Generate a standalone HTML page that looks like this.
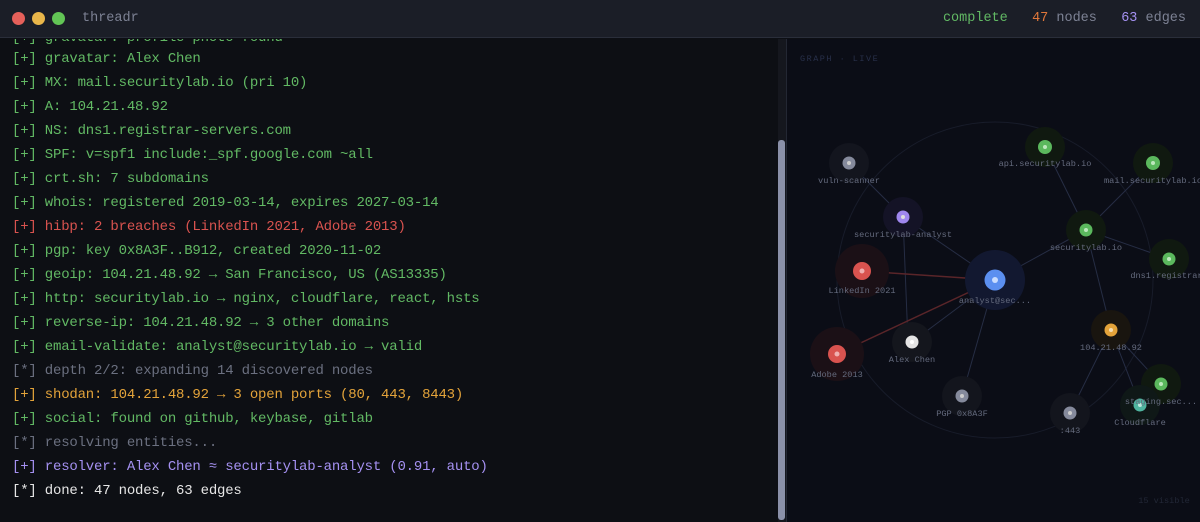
<!DOCTYPE html>
<html><head><meta charset="utf-8"><style>
*{margin:0;padding:0;box-sizing:border-box}
body{width:1200px;height:522px;overflow:hidden;background:#0d0f14;font-family:"Liberation Mono",monospace;position:relative}
.hdr{position:absolute;left:0;top:0;width:1200px;height:38px;background:#1b1e27;border-bottom:1px solid #2a2e3a}
.dot{position:absolute;top:12px;width:13px;height:13px;border-radius:50%}
.title{position:absolute;left:82px;top:11px;font-size:13.5px;color:#7d8294}
.stat{position:absolute;right:14px;top:11px;font-size:13.5px;color:#7d8294;white-space:pre}
.term{position:absolute;left:0;top:39px;width:778px;height:483px;background:#0d0f14;overflow:hidden}
.ln{position:absolute;left:12px;font-size:14px;letter-spacing:-0.2px;white-space:pre;line-height:20px}
.g{color:#62b964}.r{color:#d9534f}.o{color:#e3a33a}.d{color:#6b7080}.p{color:#a591f2}.w{color:#e6e6e6}
.track{position:absolute;left:778px;top:39px;width:8px;height:483px;background:#15171e}
.thumb{position:absolute;left:778px;top:140px;width:7px;height:380px;background:#8a90a8;border-radius:3px}
.graph{position:absolute;left:786px;top:39px;width:414px;height:483px;background:#0b0d16;border-left:1px solid #232733}
</style></head><body>
<div class="hdr">
<div class="dot" style="left:12px;background:#e5605a"></div>
<div class="dot" style="left:32px;background:#e9b64a"></div>
<div class="dot" style="left:52px;background:#62c555"></div>
<div class="title">threadr</div>
<div class="stat"><span style="color:#62b964">complete</span>   <span style="color:#e0773a">47</span> nodes   <span style="color:#a591f2">63</span> edges</div>
</div>
<div class="term">
<div class="ln g" style="top:-11px">[+] gravatar: profile photo found</div>
<div class="ln g" style="top:10px">[+] gravatar: Alex Chen</div>
<div class="ln g" style="top:34px">[+] MX: mail.securitylab.io (pri 10)</div>
<div class="ln g" style="top:58px">[+] A: 104.21.48.92</div>
<div class="ln g" style="top:82px">[+] NS: dns1.registrar-servers.com</div>
<div class="ln g" style="top:106px">[+] SPF: v=spf1 include:_spf.google.com ~all</div>
<div class="ln g" style="top:130px">[+] crt.sh: 7 subdomains</div>
<div class="ln g" style="top:154px">[+] whois: registered 2019-03-14, expires 2027-03-14</div>
<div class="ln r" style="top:178px">[+] hibp: 2 breaches (LinkedIn 2021, Adobe 2013)</div>
<div class="ln g" style="top:202px">[+] pgp: key 0x8A3F..B912, created 2020-11-02</div>
<div class="ln g" style="top:226px">[+] geoip: 104.21.48.92 → San Francisco, US (AS13335)</div>
<div class="ln g" style="top:250px">[+] http: securitylab.io → nginx, cloudflare, react, hsts</div>
<div class="ln g" style="top:274px">[+] reverse-ip: 104.21.48.92 → 3 other domains</div>
<div class="ln g" style="top:298px">[+] email-validate: analyst@securitylab.io → valid</div>
<div class="ln d" style="top:322px">[*] depth 2/2: expanding 14 discovered nodes</div>
<div class="ln o" style="top:346px">[+] shodan: 104.21.48.92 → 3 open ports (80, 443, 8443)</div>
<div class="ln g" style="top:370px">[+] social: found on github, keybase, gitlab</div>
<div class="ln d" style="top:394px">[*] resolving entities...</div>
<div class="ln p" style="top:418px">[+] resolver: Alex Chen ≈ securitylab-analyst (0.91, auto)</div>
<div class="ln w" style="top:442px">[*] done: 47 nodes, 63 edges</div>
</div>
<div class="track"></div><div class="thumb"></div>
<div class="graph">
<svg width="414" height="483" viewBox="786 39 414 483" style="position:absolute;left:0;top:0" font-family="Liberation Mono, monospace" font-size="8.6">
<text x="799" y="61" fill="#28304a" font-size="8.5" letter-spacing="1.5">GRAPH · LIVE</text>
<circle cx="994" cy="280" r="158" fill="none" stroke="#181c2a" stroke-width="1"/>
<g stroke="#262d44" stroke-width="1">
<line x1="848" y1="163" x2="902" y2="217"/><line x1="902" y1="217" x2="994" y2="280"/>
<line x1="902" y1="217" x2="907" y2="342"/>
<line x1="1044" y1="147" x2="1085" y2="230"/><line x1="1152" y1="163" x2="1085" y2="230"/>
<line x1="1085" y1="230" x2="1168" y2="259"/><line x1="1085" y1="230" x2="994" y2="280"/>
<line x1="911" y1="342" x2="994" y2="280"/><line x1="961" y1="396" x2="994" y2="280"/>
<line x1="1085" y1="230" x2="1110" y2="330"/><line x1="1110" y1="330" x2="1069" y2="413"/>
<line x1="1110" y1="330" x2="1139" y2="405"/><line x1="1110" y1="330" x2="1160" y2="384"/>
</g>
<g stroke="#5a2529" stroke-width="1.5">
<line x1="861" y1="271" x2="994" y2="280"/><line x1="836" y1="354" x2="994" y2="280"/>
</g>
<g>
<circle cx="848" cy="163" r="20" fill="#13151e"/><circle cx="848" cy="163" r="6.5" fill="#858a9c"/><circle cx="848" cy="163" r="2" fill="#ccc"/>
<circle cx="1044" cy="147" r="20" fill="#101910"/><circle cx="1044" cy="147" r="7" fill="#5bb85d"/><circle cx="1044" cy="147" r="2" fill="#bde8bd"/>
<circle cx="1152" cy="163" r="20" fill="#101910"/><circle cx="1152" cy="163" r="7" fill="#5bb85d"/><circle cx="1152" cy="163" r="2" fill="#bde8bd"/>
<circle cx="902" cy="217" r="20" fill="#141326"/><circle cx="902" cy="217" r="6.5" fill="#9f87ee"/><circle cx="902" cy="217" r="2" fill="#ddd"/>
<circle cx="1085" cy="230" r="20" fill="#101910"/><circle cx="1085" cy="230" r="6.5" fill="#5bb85d"/><circle cx="1085" cy="230" r="2" fill="#bde8bd"/>
<circle cx="1168" cy="259" r="20" fill="#101910"/><circle cx="1168" cy="259" r="6.5" fill="#5bb85d"/><circle cx="1168" cy="259" r="2" fill="#bde8bd"/>
<circle cx="861" cy="271" r="27" fill="#1b1016"/><circle cx="861" cy="271" r="9" fill="#d9534f"/><circle cx="861" cy="271" r="2.5" fill="#f0b0b0"/>
<circle cx="994" cy="280" r="30" fill="#121830"/><circle cx="994" cy="280" r="10.5" fill="#5b8ff0"/><circle cx="994" cy="280" r="3" fill="#c9dcff"/>
<circle cx="911" cy="342" r="20" fill="#14161d"/><circle cx="911" cy="342" r="6.5" fill="#e4e4e4"/><circle cx="911" cy="342" r="2" fill="#fff"/>
<circle cx="836" cy="354" r="27" fill="#1b1016"/><circle cx="836" cy="354" r="9" fill="#d9534f"/><circle cx="836" cy="354" r="2.5" fill="#f0b0b0"/>
<circle cx="1110" cy="330" r="20" fill="#19150f"/><circle cx="1110" cy="330" r="6.5" fill="#e3a33a"/><circle cx="1110" cy="330" r="2" fill="#f5ddb0"/>
<circle cx="961" cy="396" r="20" fill="#13151d"/><circle cx="961" cy="396" r="6.5" fill="#858a9c"/><circle cx="961" cy="396" r="2" fill="#ccc"/>
<circle cx="1069" cy="413" r="20" fill="#13151d"/><circle cx="1069" cy="413" r="6.5" fill="#858a9c"/><circle cx="1069" cy="413" r="2" fill="#ccc"/>
<circle cx="1160" cy="384" r="20" fill="#101910"/><circle cx="1160" cy="384" r="6.5" fill="#5bb85d"/><circle cx="1160" cy="384" r="2" fill="#bde8bd"/>
<circle cx="1139" cy="405" r="20" fill="#0f1817"/><circle cx="1139" cy="405" r="6.5" fill="#4fb5a0"/><circle cx="1139" cy="405" r="2" fill="#bde8dd"/>
</g>
<g fill="#646a7d" text-anchor="middle">
<text x="848" y="183">vuln-scanner</text>
<text x="1044" y="166">api.securitylab.io</text>
<text x="1152" y="183">mail.securitylab.io</text>
<text x="902" y="237">securitylab-analyst</text>
<text x="1085" y="250">securitylab.io</text>
<text x="1168" y="278">dns1.registrar.</text>
<text x="861" y="293">LinkedIn 2021</text>
<text x="994" y="303">analyst@sec...</text>
<text x="911" y="362">Alex Chen</text>
<text x="836" y="377">Adobe 2013</text>
<text x="1110" y="350">104.21.48.92</text>
<text x="961" y="416">PGP 0x8A3F</text>
<text x="1069" y="433">:443</text>
<text x="1160" y="404">staging.sec...</text>
<text x="1139" y="425">Cloudflare</text>
<text x="1163" y="503" fill="#222736">15 visible</text>
</g>
</svg>
</div>
</body></html>
